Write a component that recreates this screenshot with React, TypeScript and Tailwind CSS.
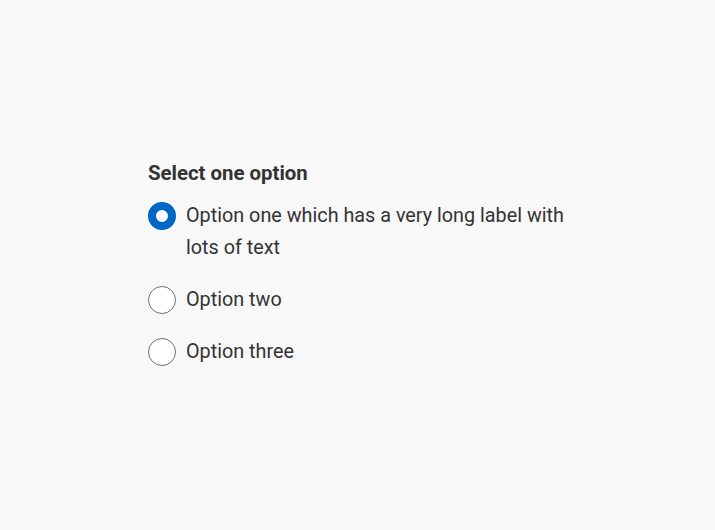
import React, { useState } from "react";

const options = [
  "Option one which has a very long label with lots of text",
  "Option two",
  "Option three",
];

export default function App() {
  const [sel, setSel] = useState(0);
  return (
    <div className="min-h-[530px] w-full bg-[#f8f8f8] pl-[148px] pt-[161px]" style={{ fontFamily: "Roboto, 'Noto Sans', sans-serif" }}>
      <fieldset className="w-[440px]">
        <legend className="text-[20.4px] leading-6 font-bold text-[#333333] mb-[15px]">
          Select one option
        </legend>
        <div className="flex flex-col gap-5">
          {options.map((o, i) => (
            <label key={o} className="flex items-start gap-[10px] cursor-pointer" onClick={() => setSel(i)}>
              <span className="flex h-8 items-center shrink-0">
                <span
                  className={
                    i === sel
                      ? "block h-7 w-7 rounded-full border-[8px] border-[#0067c5] bg-white"
                      : "block h-7 w-7 rounded-full border border-[#707070] bg-white"
                  }
                />
              </span>
              <span className="w-[400px] text-[19.8px] leading-8 text-[#333333]">{o}</span>
            </label>
          ))}
        </div>
      </fieldset>
    </div>
  );
}
